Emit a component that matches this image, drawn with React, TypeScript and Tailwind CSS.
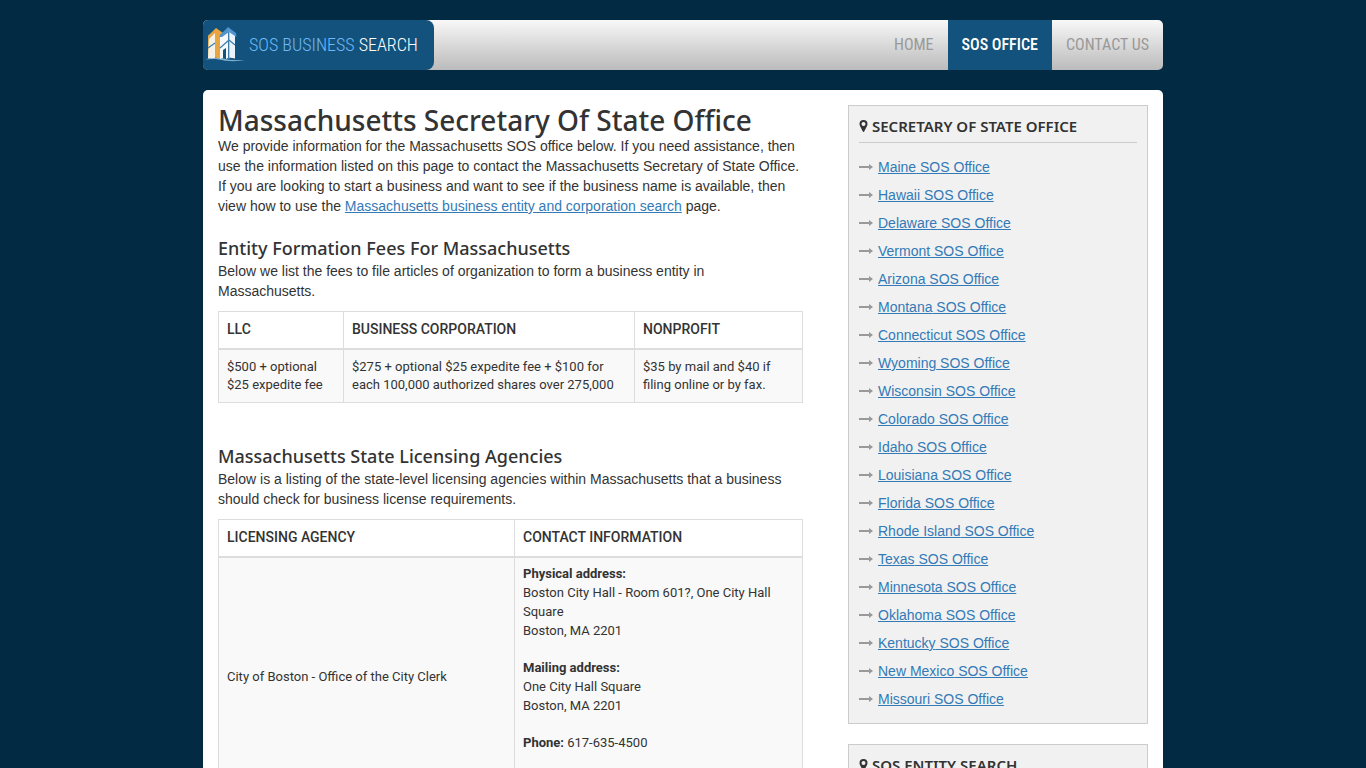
import React from 'react';

const offices = [
  'Maine', 'Hawaii', 'Delaware', 'Vermont', 'Arizona', 'Montana', 'Connecticut',
  'Wyoming', 'Wisconsin', 'Colorado', 'Idaho', 'Louisiana', 'Florida', 'Rhode Island',
  'Texas', 'Minnesota', 'Oklahoma', 'Kentucky', 'New Mexico', 'Missouri',
];

const Logo: React.FC = () => (
  <svg className="w-10 h-10 shrink-0" viewBox="0 0 40 40" aria-hidden="true">
    <path d="M0 34.500c8-2.500 16-2 24 .3l16 .7c-8 .8-14 .8-20 .2-7-1.700-12-2.200-20-1.200z" fill="#7fb0cf" />
    <path d="M3 11l7-6v28l-7 .5z" fill="#f6f1e6" />
    <path d="M3 11l8-8 7 5-3 2v23.500l-5-1V8l-6 6-1 19.500z" fill="#e9a53f" />
    <path d="M15 11l8-6v28l-2 1V23l-3 2v8l-3 1z" fill="#f4f9fc" />
    <path d="M24 5l6 5v23.500l-6-1z" fill="#e9f3fa" />
    <path d="M14 12l2-3 7-7 8 6 .5 4L24 7l-7 5z" fill="#4f93cf" />
    <path d="M23.500 5h1v29h-1z" fill="#6fa6d2" />
    <path d="M3 23l7-5M15 23l9-8M24 15l6 5" stroke="#3c7dab" strokeWidth="1.200" fill="none" />
  </svg>
);

const Arrow: React.FC = () => (
  <svg className="w-3.5 h-3.5 shrink-0" viewBox="0 0 14 14" aria-hidden="true">
    <path d="M0 6h10V4l4 3-4 3V8H0z" fill="#999" />
  </svg>
);

const SideBox: React.FC<{ title: string; children?: React.ReactNode }> = ({ title, children }) => (
  <section className="mb-5 border border-[#ccc] bg-[#f1f1f1] p-2.5">
    <h3 className="flex items-center gap-1 border-b border-[#ccc] pb-1.5 font-['Noto_Sans',sans-serif] text-[15px] font-semibold leading-5 uppercase">
      <svg className="w-[9px] h-3 shrink-0" viewBox="0 0 9 12" aria-hidden="true">
        <path fillRule="evenodd" d="M4.5 0a4 4 0 0 1 4 4c0 .8-.2 1.400-.5 2L5.200 11.500a.8.8 0 0 1-1.400 0L1 6C.7 5.400.5 4.800.5 4a4 4 0 0 1 4-4zm0 2a2 2 0 1 0 0 4 2 2 0 0 0 0-4z" fill="#333" />
      </svg>
      {title}
    </h3>
    {children}
  </section>
);

const App: React.FC = () => {
  const navLink = 'flex items-center px-3.5';
  const heading = "font-['Noto_Sans',sans-serif] font-medium";
  const th = 'border border-b-2 border-[#ddd] px-2 pt-2 pb-2.5 text-left text-sm font-medium leading-[18px] uppercase';
  const td = 'border border-[#ddd] bg-[#f9f9f9] p-2 align-middle';

  return (
    <div className="min-h-screen bg-[#022a43] px-4 pt-5 font-['Liberation_Sans',sans-serif] text-sm leading-5 text-[#333]">
      <div className="mx-auto max-w-[960px]">
        <header className="mb-5 flex h-[50px] justify-between overflow-hidden rounded-[5px] bg-linear-to-b from-[#f8f8f8] to-[#bbb]">
          <a href="#home" className="flex items-center gap-1 rounded-r-lg bg-[#13527c] pl-0.5 pr-4">
            <Logo />
            <span className="font-['Roboto_Condensed','Liberation_Sans_Narrow',sans-serif] text-lg font-light text-white">
              <span className="text-[#6fb9f7]">SOS BUSINESS</span> SEARCH
            </span>
          </a>
          <nav className="flex font-['Roboto_Condensed','Liberation_Sans_Narrow',sans-serif] text-base text-[#999]">
            <a href="#home" className={navLink}>HOME</a>
            <a href="#office" className={`${navLink} bg-[#13527c] font-medium text-white`}>SOS OFFICE</a>
            <a href="#contact" className={navLink}>CONTACT US</a>
          </nav>
        </header>

        <div className="flex gap-[45px] rounded-t-[5px] bg-white p-[15px]">
          <main className="min-w-0 flex-1">
            <h1 className={`${heading} text-[28px] leading-[31px]`}>Massachusetts Secretary Of State Office</h1>
            <p className="mb-5">
              We provide information for the Massachusetts SOS office below. If you need assistance, then use the
              information listed on this page to contact the Massachusetts Secretary of State Office. If you are looking
              to start a business and want to see if the business name is available, then view how to use the{' '}
              <a href="#search" className="text-[#337ab7] underline">Massachusetts business entity and corporation search</a> page.
            </p>

            <h2 className={`${heading} text-lg leading-[25px]`}>Entity Formation Fees For Massachusetts</h2>
            <p className="mb-2.5">Below we list the fees to file articles of organization to form a business entity in Massachusetts.</p>
            <table className="mb-[41px] w-full table-fixed border-collapse font-['Roboto',sans-serif] text-[13px] leading-[18px]">
              <thead>
                <tr>
                  <th className={`${th} w-[125px]`}>LLC</th>
                  <th className={th}>Business Corporation</th>
                  <th className={`${th} w-[168px]`}>Nonprofit</th>
                </tr>
              </thead>
              <tbody>
                <tr>
                  <td className={td}>$500 + optional $25 expedite fee</td>
                  <td className={td}>$275 + optional $25 expedite fee + $100 for each 100,000 authorized shares over 275,000</td>
                  <td className={td}>$35 by mail and $40 if filing online or by fax.</td>
                </tr>
              </tbody>
            </table>

            <h2 className={`${heading} text-lg leading-[25px]`}>Massachusetts State Licensing Agencies</h2>
            <p className="mb-2.5">
              Below is a listing of the state-level licensing agencies within Massachusetts that a business should check
              for business license requirements.
            </p>
            <table className="w-full table-fixed border-collapse font-['Roboto',sans-serif] text-[13px] leading-[19px]">
              <thead>
                <tr>
                  <th className={th}>Licensing Agency</th>
                  <th className={`${th} w-[288px]`}>Contact Information</th>
                </tr>
              </thead>
              <tbody>
                <tr>
                  <td className={td}>City of Boston - Office of the City Clerk</td>
                  <td className="border border-[#ddd] bg-[#f9f9f9] px-2 pt-1.5 pb-6">
                    <p className="mb-[18px]">
                      <b>Physical address:</b><br />
                      Boston City Hall - Room 601?, One City Hall Square<br />
                      Boston, MA 2201
                    </p>
                    <p className="mb-[18px]">
                      <b>Mailing address:</b><br />
                      One City Hall Square<br />
                      Boston, MA 2201
                    </p>
                    <p className="mb-[18px]"><b>Phone:</b> 617-635-4500</p>
                  </td>
                </tr>
              </tbody>
            </table>
          </main>

          <aside className="w-[300px] shrink-0">
            <SideBox title="Secretary of State Office">
              <ul className="mt-2.5">
                {offices.map((state) => (
                  <li key={state} className="flex items-center gap-[5px] py-1">
                    <Arrow />
                    <a href="#office" className="text-[#337ab7] underline">{state} SOS Office</a>
                  </li>
                ))}
              </ul>
            </SideBox>
            <SideBox title="SOS Entity Search" />
          </aside>
        </div>
      </div>
    </div>
  );
};

export default App;
